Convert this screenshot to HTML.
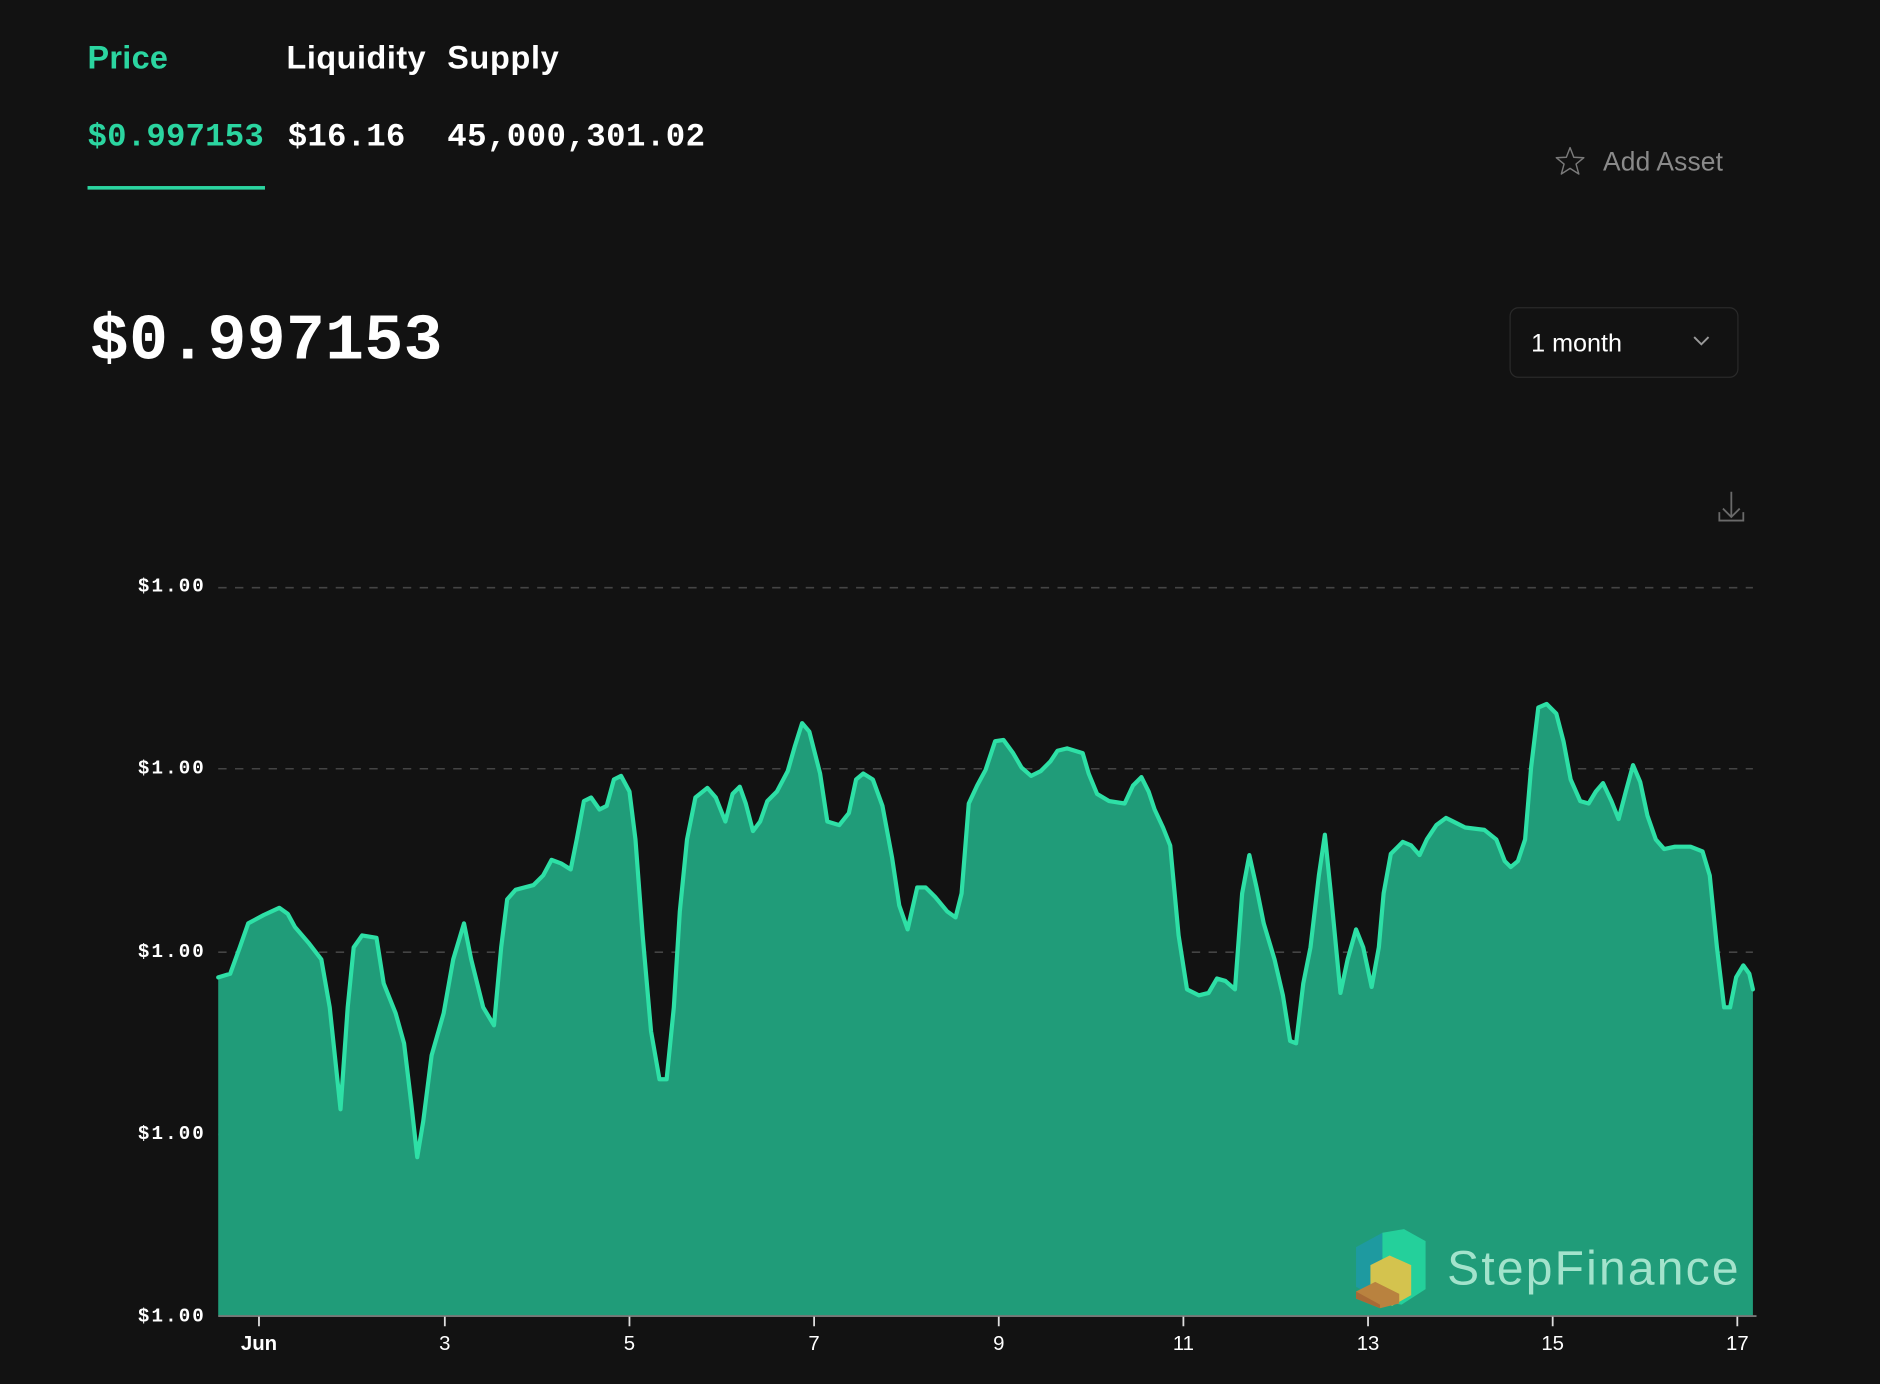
<!DOCTYPE html>
<html><head><meta charset="utf-8"><style>
html,body{margin:0;padding:0;background:#121212;width:1880px;height:1384px;overflow:hidden}
svg{display:block}
.sans{font-family:"Liberation Sans",sans-serif}
.mono{font-family:"Liberation Mono",monospace}
</style></head><body>
<svg width="1880" height="1384" viewBox="0 0 1568 1154" xmlns="http://www.w3.org/2000/svg">
<rect width="1568" height="1154" fill="#121212"/>
<text x="73" y="57" class="sans" font-size="27" font-weight="bold" fill="#2bd5a0" textLength="67">Price</text>
<text x="239" y="57" class="sans" font-size="27" font-weight="bold" fill="#fff" textLength="116">Liquidity</text>
<text x="373" y="57" class="sans" font-size="27" font-weight="bold" fill="#fff" textLength="93">Supply</text>
<text x="73" y="121" class="mono" font-size="27" font-weight="bold" fill="#2bd5a0" textLength="147">$0.997153</text>
<text x="240" y="121" class="mono" font-size="27" font-weight="bold" fill="#fff" textLength="98">$16.16</text>
<text x="373" y="121" class="mono" font-size="27" font-weight="bold" fill="#fff" textLength="215">45,000,301.02</text>
<rect x="73" y="155" width="148" height="3" fill="#2bd5a0"/>
<path d="M1309.5 123 L1312.6 131 L1321 131.4 L1314.5 136.7 L1316.8 145 L1309.5 140.3 L1302.2 145 L1304.5 136.7 L1298 131.4 L1306.4 131 Z" fill="none" stroke="#7a7a7a" stroke-width="1.2" stroke-linejoin="round"/>
<text x="1337" y="142" class="sans" font-size="22" fill="#8a8a8a" textLength="100">Add Asset</text>
<text x="75" y="299" class="mono" font-size="54" font-weight="bold" fill="#fff" textLength="294">$0.997153</text>
<rect x="1259.5" y="256.5" width="190" height="58" rx="7" fill="#121212" stroke="#2a2a2a"/>
<text x="1277" y="293" class="sans" font-size="21" fill="#fff">1 month</text>
<path d="M1413 281 L1419 287 L1425 281" fill="none" stroke="#9a9a9a" stroke-width="1.6"/>
<path d="M1444 410 V431 M1437 424 L1444 431 L1451 424 M1434 427 V434 H1454 V427" fill="none" stroke="#6a6a6a" stroke-width="1.5"/>
<g class="mono" font-size="16" font-weight="bold" fill="#fff">
<text x="115" y="493" textLength="55">$1.00</text><text x="115" y="645" textLength="55">$1.00</text><text x="115" y="798" textLength="55">$1.00</text><text x="115" y="950" textLength="55">$1.00</text><text x="115" y="1102" textLength="55">$1.00</text>
</g>
<g stroke="#444" stroke-width="1.3" stroke-dasharray="7 7">
<line x1="182" y1="490" x2="1462" y2="490"/><line x1="182" y1="641" x2="1462" y2="641"/><line x1="182" y1="794" x2="1462" y2="794"/><line x1="182" y1="946" x2="1462" y2="946"/>
</g>
<path id="c" d="M182 815 L192 812 L200 790 L207 770 L220 763 L233 757 L240 762 L246 773 L258 787 L268 800 L275 840 L284 925 L290 840 L295 790 L302 780 L314 782 L320 820 L330 845 L337 870 L343 920 L348 965 L353 935 L360 880 L370 845 L378 800 L387 770 L393 800 L403 840 L412 855 L418 790 L423 750 L430 742 L445 738 L453 730 L460 717 L468 720 L476 725 L481 700 L487 668 L493 665 L500 675 L506 672 L512 650 L518 647 L525 660 L530 700 L536 780 L543 860 L550 900 L556 900 L562 840 L567 760 L573 700 L580 665 L590 657 L597 665 L605 685 L611 662 L617 656 L622 670 L628 693 L634 685 L640 668 L648 660 L657 643 L663 622 L669 603 L675 610 L684 645 L690 685 L700 688 L708 678 L714 650 L720 645 L728 650 L736 672 L744 715 L750 755 L757 775 L765 740 L772 740 L780 748 L790 760 L797 765 L802 745 L808 670 L815 655 L822 642 L830 618 L837 617 L845 628 L852 640 L860 647 L868 643 L876 635 L882 626 L890 624 L903 628 L908 645 L915 662 L925 668 L938 670 L945 655 L952 648 L958 660 L963 675 L970 690 L976 705 L983 780 L990 825 L1000 830 L1008 828 L1015 816 L1022 818 L1030 825 L1036 745 L1042 713 L1048 740 L1054 770 L1063 800 L1070 830 L1076 868 L1081 870 L1087 820 L1093 790 L1100 730 L1105 696 L1110 745 L1118 828 L1124 800 L1131 775 L1137 790 L1144 823 L1150 790 L1154 745 L1160 712 L1170 702 L1177 705 L1184 713 L1190 700 L1198 688 L1206 682 L1214 686 L1222 690 L1238 692 L1248 700 L1255 718 L1260 723 L1266 718 L1272 700 L1277 640 L1283 590 L1290 587 L1298 595 L1304 618 L1310 650 L1318 668 L1325 670 L1331 660 L1337 653 L1344 668 L1350 683 L1356 660 L1362 638 L1368 652 L1374 680 L1381 700 L1388 708 L1397 706 L1410 706 L1420 710 L1426 730 L1432 790 L1438 840 L1443 840 L1448 815 L1454 805 L1459 812 L1462 825" fill="none"/>
<path d="M182 815 L192 812 L200 790 L207 770 L220 763 L233 757 L240 762 L246 773 L258 787 L268 800 L275 840 L284 925 L290 840 L295 790 L302 780 L314 782 L320 820 L330 845 L337 870 L343 920 L348 965 L353 935 L360 880 L370 845 L378 800 L387 770 L393 800 L403 840 L412 855 L418 790 L423 750 L430 742 L445 738 L453 730 L460 717 L468 720 L476 725 L481 700 L487 668 L493 665 L500 675 L506 672 L512 650 L518 647 L525 660 L530 700 L536 780 L543 860 L550 900 L556 900 L562 840 L567 760 L573 700 L580 665 L590 657 L597 665 L605 685 L611 662 L617 656 L622 670 L628 693 L634 685 L640 668 L648 660 L657 643 L663 622 L669 603 L675 610 L684 645 L690 685 L700 688 L708 678 L714 650 L720 645 L728 650 L736 672 L744 715 L750 755 L757 775 L765 740 L772 740 L780 748 L790 760 L797 765 L802 745 L808 670 L815 655 L822 642 L830 618 L837 617 L845 628 L852 640 L860 647 L868 643 L876 635 L882 626 L890 624 L903 628 L908 645 L915 662 L925 668 L938 670 L945 655 L952 648 L958 660 L963 675 L970 690 L976 705 L983 780 L990 825 L1000 830 L1008 828 L1015 816 L1022 818 L1030 825 L1036 745 L1042 713 L1048 740 L1054 770 L1063 800 L1070 830 L1076 868 L1081 870 L1087 820 L1093 790 L1100 730 L1105 696 L1110 745 L1118 828 L1124 800 L1131 775 L1137 790 L1144 823 L1150 790 L1154 745 L1160 712 L1170 702 L1177 705 L1184 713 L1190 700 L1198 688 L1206 682 L1214 686 L1222 690 L1238 692 L1248 700 L1255 718 L1260 723 L1266 718 L1272 700 L1277 640 L1283 590 L1290 587 L1298 595 L1304 618 L1310 650 L1318 668 L1325 670 L1331 660 L1337 653 L1344 668 L1350 683 L1356 660 L1362 638 L1368 652 L1374 680 L1381 700 L1388 708 L1397 706 L1410 706 L1420 710 L1426 730 L1432 790 L1438 840 L1443 840 L1448 815 L1454 805 L1459 812 L1462 825 L1462 1097 L182 1097 Z" fill="#209c79"/>
<use href="#c" stroke="#2ee0a6" stroke-width="3.5" stroke-linejoin="round" stroke-linecap="round"/>
<line x1="182" y1="1097.5" x2="1465" y2="1097.5" stroke="#777" stroke-width="1.5"/>
<g stroke="#ddd" stroke-width="1.5">
<line x1="216" y1="1098" x2="216" y2="1106"/><line x1="371" y1="1098" x2="371" y2="1106"/><line x1="525" y1="1098" x2="525" y2="1106"/><line x1="679" y1="1098" x2="679" y2="1106"/><line x1="833" y1="1098" x2="833" y2="1106"/><line x1="987" y1="1098" x2="987" y2="1106"/><line x1="1141" y1="1098" x2="1141" y2="1106"/><line x1="1295" y1="1098" x2="1295" y2="1106"/><line x1="1449" y1="1098" x2="1449" y2="1106"/>
</g>
<g class="sans" font-size="17" fill="#fff" text-anchor="middle">
<text x="216" y="1126" font-weight="bold">Jun</text><text x="371" y="1126">3</text><text x="525" y="1126">5</text><text x="679" y="1126">7</text><text x="833" y="1126">9</text><text x="987" y="1126">11</text><text x="1141" y="1126">13</text><text x="1295" y="1126">15</text><text x="1449" y="1126">17</text>
</g>
<g transform="translate(1131,1025)">
<path d="M0 15 L22 3 L22 60 L0 48 Z" fill="#1e9aa0"/>
<path d="M22 3 L40 0 L58 10 L58 50 L38 63 L22 60 Z" fill="#24d09b"/>
<path d="M12 30 L28 22 L46 30 L46 55 L30 64 L12 55 Z" fill="#d4c34e"/>
<path d="M0 52 L16 44 L36 54 L36 62 L20 66 L0 58 Z" fill="#b9823f"/>
<path d="M0 52 L20 63 L20 66 L0 58 Z" fill="#a86a36"/>
</g>
<text x="1207" y="1071" class="sans" font-size="40" fill="#a3e3cc" textLength="243">StepFinance</text>
</svg>
</body></html>
